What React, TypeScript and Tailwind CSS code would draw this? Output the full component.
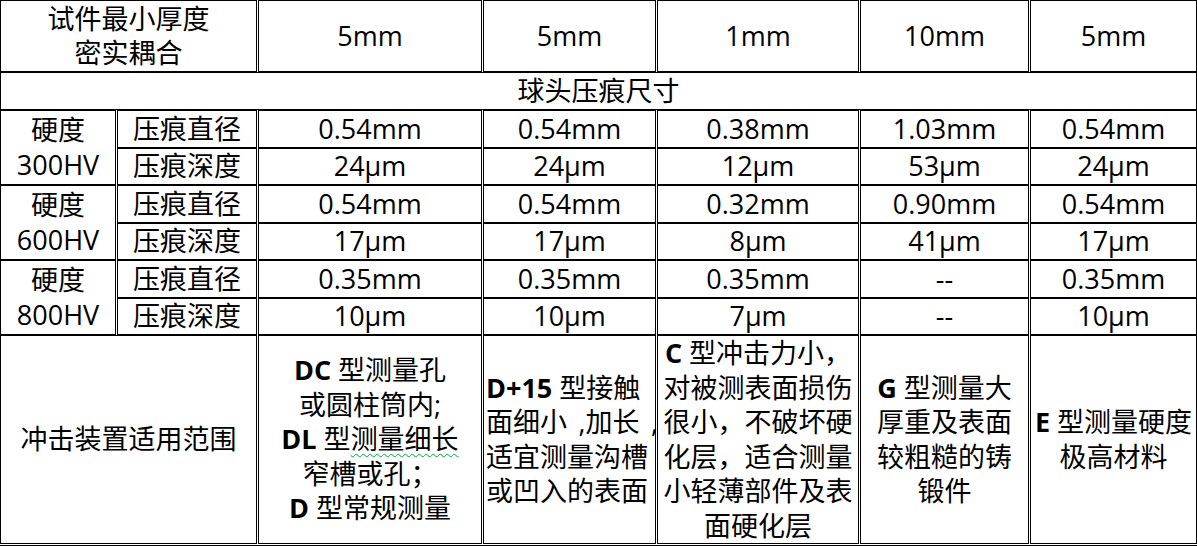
const sizes = ["5mm", "5mm", "1mm", "10mm", "5mm"];

const groups = [
  {
    hv: "300HV",
    dia: ["0.54mm", "0.54mm", "0.38mm", "1.03mm", "0.54mm"],
    depth: ["24μm", "24μm", "12μm", "53μm", "24μm"],
  },
  {
    hv: "600HV",
    dia: ["0.54mm", "0.54mm", "0.32mm", "0.90mm", "0.54mm"],
    depth: ["17μm", "17μm", "8μm", "41μm", "17μm"],
  },
  {
    hv: "800HV",
    dia: ["0.35mm", "0.35mm", "0.35mm", "--", "0.35mm"],
    depth: ["10μm", "10μm", "7μm", "--", "10μm"],
  },
];

const cell = "border border-black flex items-center justify-center text-center";

export default function App() {
  return (
    <div className="w-[1197px] h-[546px] bg-white text-black font-['Open_Sans','Noto_Sans_CJK_SC',sans-serif] text-[27px] leading-[34.5px]">
      <div className="grid grid-cols-[116px_140px_224px_173px_202px_169px_167px] grid-rows-[72px_38px_38px_37px_38px_37px_38px_37px_209px] gap-x-px border-b border-black pb-px">
        {/* header */}
        <div className={`${cell} col-span-2 flex-col`}>
          <span>试件最小厚度</span>
          <span>密实耦合</span>
        </div>
        {sizes.map((s, i) => (
          <div key={i} className={cell}>
            {s}
          </div>
        ))}

        <div className={`${cell} col-span-7`}>球头压痕尺寸</div>

        {groups.map((g) => [
          <div key={g.hv + "-l"} className={`${cell} row-span-2 flex-col`}>
            <span>硬度</span>
            <span>{g.hv}</span>
          </div>,
          <div key={g.hv + "-d"} className={cell}>
            压痕直径
          </div>,
          ...g.dia.map((v, i) => (
            <div key={g.hv + "-d" + i} className={cell}>
              {v}
            </div>
          )),
          <div key={g.hv + "-h"} className={cell}>
            压痕深度
          </div>,
          ...g.depth.map((v, i) => (
            <div key={g.hv + "-h" + i} className={cell}>
              {v}
            </div>
          )),
        ])}

        {/* application range */}
        <div className={`${cell} col-span-2`}>冲击装置适用范围</div>
        <div className={`${cell} flex-col whitespace-nowrap`}>
          <span>
            <b>DC</b> 型测量孔
          </span>
          <span>或圆柱筒内;</span>
          <span>
            <b>DL</b> 型
            <span className="underline decoration-wavy decoration-green-600 decoration-1 underline-offset-4">测量细长</span>
          </span>
          <span>窄槽或孔；</span>
          <span>
            <b>D</b> 型常规测量
          </span>
        </div>
        <div className="border border-black flex flex-col justify-center items-start pl-[2px] whitespace-pre">
          <span>
            <b>D+15</b> 型接触
          </span>
          <span>{"面细小 \u2009,加长 \u2009,"}</span>
          <span>适宜测量沟槽</span>
          <span>或凹入的表面</span>
        </div>
        <div className={`${cell} flex-col whitespace-nowrap`}>
          <span>
            <b>C</b> 型冲击力小，
          </span>
          <span>对被测表面损伤</span>
          <span>很小，不破坏硬</span>
          <span>化层，适合测量</span>
          <span>小轻薄部件及表</span>
          <span>面硬化层</span>
        </div>
        <div className={`${cell} flex-col whitespace-nowrap`}>
          <span>
            <b>G</b> 型测量大
          </span>
          <span>厚重及表面</span>
          <span>较粗糙的铸</span>
          <span>锻件</span>
        </div>
        <div className={`${cell} flex-col whitespace-nowrap`}>
          <span>
            <b>E</b> 型测量硬度
          </span>
          <span>极高材料</span>
        </div>
      </div>
    </div>
  );
}
